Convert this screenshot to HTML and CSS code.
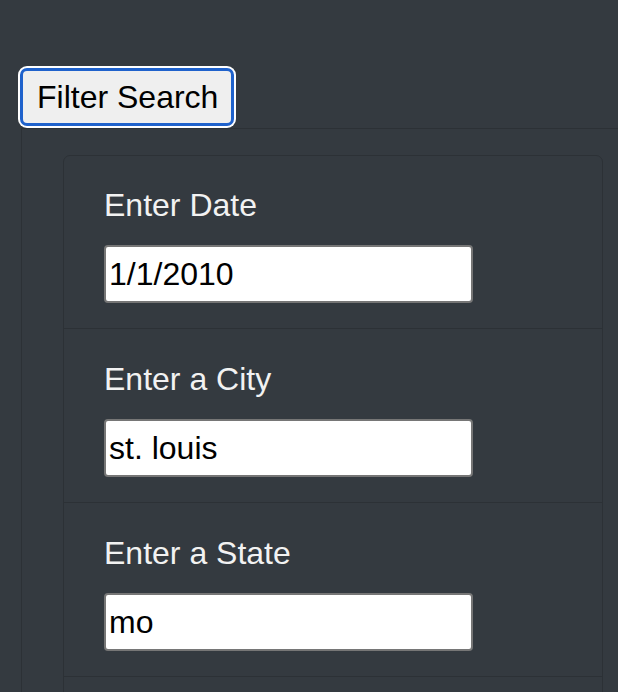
FILE: index.html
```html
<!DOCTYPE html>
<html lang="en">
<head>
<meta charset="utf-8">
<title>Filter Search</title>
<link rel="stylesheet" href="styles.css">
</head>
<body>
  <div class="page">
    <button class="toggle" type="button">Filter Search</button>
    <aside class="filters">
      <ul class="list">
        <li class="item">
          <label class="label" for="date">Enter Date</label>
          <input class="field" id="date" type="text" value="1/1/2010">
        </li>
        <li class="item">
          <label class="label" for="city">Enter a City</label>
          <input class="field" id="city" type="text" value="st. louis">
        </li>
        <li class="item">
          <label class="label" for="state">Enter a State</label>
          <input class="field" id="state" type="text" value="mo">
        </li>
      </ul>
    </aside>
  </div>
</body>
</html>
```

FILE: styles.css
```css
html, body {
  margin: 0;
  padding: 0;
  background: #343a40;
  height: 100%;
  overflow: hidden;
}

.page {
  padding-top: 68px;
  font-family: "Liberation Sans", Arial, sans-serif;
}

.toggle {
  display: block;
  margin: 0 0 2px 20px;
  box-sizing: border-box;
  height: 58px;
  padding: 1px 13px 0 14px;
  font-family: "Liberation Sans", Arial, sans-serif;
  font-size: 32px;
  color: #000;
  background: #efefef;
  border: 3px solid #1f62cc;
  border-radius: 7px;
  box-shadow: 0 0 0 2px #ffffff;
}

.filters {
  margin-left: 21px;
  border-top: 1px solid #2c3136;
  border-left: 1px solid #2c3136;
  padding: 26px 15px 0 41px;
}

.list {
  list-style: none;
  margin: 0;
  padding: 0 0 60px;
  border: 1px solid #2c3136;
  border-radius: 7px;
}

.item {
  display: flex;
  flex-direction: column;
  align-items: flex-start;
  padding: 25px 40px 25px;
  border-bottom: 1px solid #2c3136;
}

.item + .item {
  padding-top: 26px;
}

.label {
  display: block;
  font-size: 32px;
  line-height: 49px;
  color: #f2f2f2;
  margin-bottom: 15px;
}

.field {
  box-sizing: border-box;
  width: 369px;
  height: 58px;
  margin: 0;
  padding: 0 3px;
  font-family: "Liberation Sans", Arial, sans-serif;
  font-size: 32px;
  color: #000;
  background: #fff;
  border: 2px solid #767676;
  border-radius: 4px;
  outline: none;
}
```
